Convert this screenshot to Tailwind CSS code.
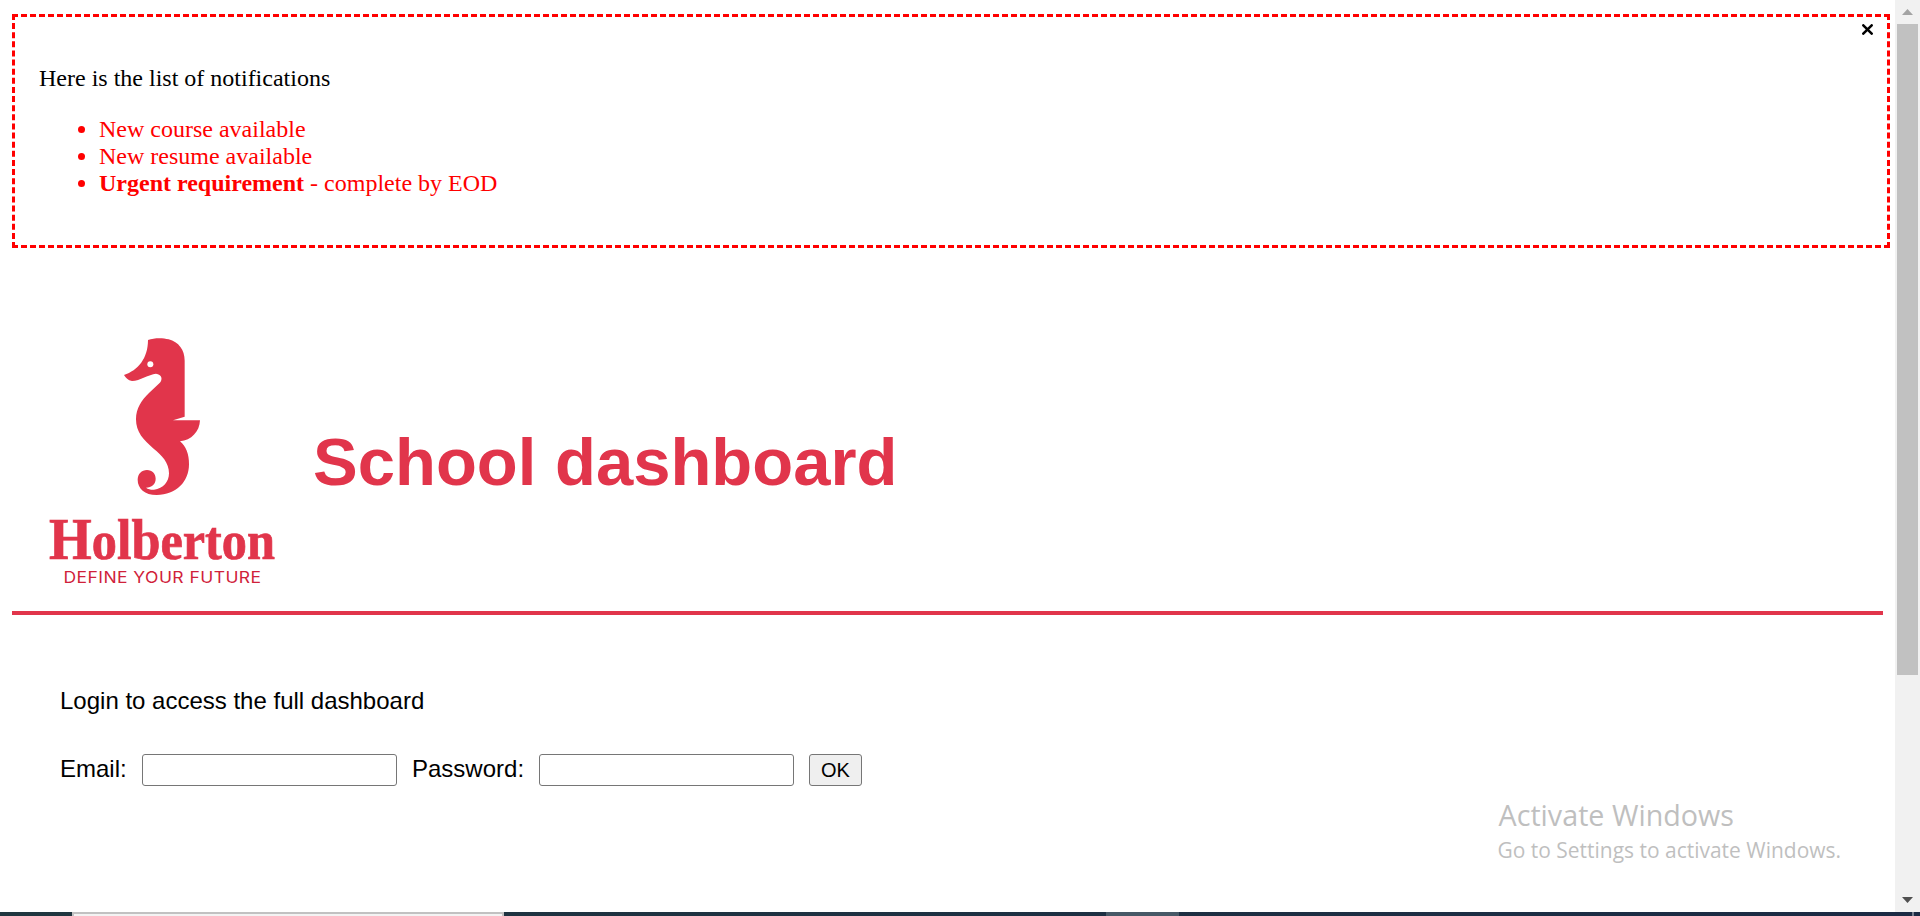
<!DOCTYPE html>
<html lang="en">
<head>
<meta charset="utf-8">
<title>School dashboard</title>
<script src="https://cdn.jsdelivr.net/npm/@tailwindcss/browser@4"></script>
</head>
<body class="flex h-[916px] w-[1920px] flex-col overflow-hidden bg-white text-black">
  <div class="relative flex h-[912px]">
    <main class="w-[1895px] pt-[14px] pl-3 font-['Liberation_Sans',Arial,sans-serif] text-[24px] leading-[27px]">
      <!-- Notifications -->
      <section class="relative h-[234px] w-[1878px] border-[3px] border-dashed border-[#ff0000] p-6 font-['Liberation_Serif','Times_New_Roman',serif]">
        <p class="my-6">Here is the list of notifications</p>
        <ul class="list-disc pl-[60px] text-[#ff0000]">
          <li>New course available</li>
          <li>New resume available</li>
          <li><strong class="font-bold">Urgent requirement</strong> - complete by EOD</li>
        </ul>
        <button class="absolute top-[7px] right-[14px]" aria-label="Close">
          <svg class="block" width="11" height="11" viewBox="0 0 11 11" fill="none" stroke="#000" stroke-width="2.5" stroke-linecap="round"><path d="M1.3 1.3L9.7 9.7M9.7 1.3L1.3 9.7"/></svg>
        </button>
      </section>

      <!-- Header -->
      <header class="flex h-[367px] w-[1871px] border-b-4 border-[#e1354b] pt-[72px]">
        <svg class="block shrink-0" width="301" height="280" viewBox="12 320 301 280" fill="#e1354b">
          <g transform="translate(100 320) scale(.33333)">
            <path d="M144 60C163 53 188 53 206 58C236 66 254 90 254 122V290L219 301H300C299 335 274 361 240 364C258 379 267 402 267 433C267 485 229 525 170 525C134 525 113 505 113 479C113 462 125 450 141 450C157 450 167 461 167 476C167 492 155 503 138 503C145 508 155 510 162 509C190 506 207 485 207 460C207 428 186 406 161 386C130 360 108 336 108 298C108 265 125 240 147 219L178 190C190 178 185 163 168 161C146 163 120 182 96 183C84 181 77 173 72 165C114 151 144 115 144 60Z"/>
            <circle cx="151" cy="133" r="9" fill="#fff"/>
          </g>
          <text x="49" y="558.700" textLength="226" lengthAdjust="spacingAndGlyphs" class="font-['Liberation_Serif',serif] text-[54px] font-bold" stroke="#e1354b" stroke-width=".7"><tspan class="text-[59px]">H</tspan>o<tspan class="text-[56px]">lb</tspan>erton</text>
          <text x="63.500" y="583" textLength="198" lengthAdjust="spacingAndGlyphs" fill="#d0213a" class="font-['Inter',sans-serif] text-[16px] tracking-[0.4px]">DEFINE YOUR FUTURE</text>
        </svg>
        <h1 class="pt-[103px] text-[67px] leading-[77px] font-bold text-[#e1354b]">School dashboard</h1>
      </header>

      <!-- Login -->
      <section class="pt-[72px] pl-12">
        <p>Login to access the full dashboard</p>
        <form class="mt-[40px] flex h-8 items-center">
          <label for="email" class="w-[82px] pb-[3px]">Email:</label>
          <input id="email" type="email" class="h-8 w-[255px] rounded-[3px] border border-[#767676] bg-white">
          <label for="password" class="ml-[15px] w-[127px] pb-[3px]">Password:</label>
          <input id="password" type="password" class="h-8 w-[255px] rounded-[3px] border border-[#767676] bg-white">
          <button type="button" class="ml-[15px] h-8 w-[53px] rounded-[3px] border border-[#767676] bg-[#efefef] text-[20px] leading-[30px]">OK</button>
        </form>
      </section>
    </main>

    <!-- Scrollbar -->
    <aside class="flex w-[25px] flex-col items-center bg-[#f1f1f1] pr-px">
      <svg class="block shrink-0" width="21" height="24" viewBox="0 0 21 24"><path d="M5 15L10.500 9L16 15Z" fill="#a3a3a3"/></svg>
      <div class="h-[651px] w-[21px] bg-[#c1c1c1]"></div>
      <svg class="mt-auto block shrink-0" width="21" height="24" viewBox="0 888 21 24"><path d="M5 897H16L10.500 903Z" fill="#505050"/></svg>
    </aside>

    <!-- Desktop watermark -->
    <svg class="absolute top-[790px] left-[1490px]" width="370" height="90" viewBox="1490 790 370 90" fill="#bfbfbf">
      <text x="1498.500" y="826" textLength="235.500" lengthAdjust="spacingAndGlyphs" class="font-['Open_Sans',sans-serif] text-[29px]">Activate Windows</text>
      <text x="1497.500" y="858" textLength="343.500" lengthAdjust="spacingAndGlyphs" class="font-['Open_Sans',sans-serif] text-[21.500px]">Go to Settings to activate Windows.</text>
    </svg>
  </div>

  <!-- Taskbar edge -->
  <footer class="flex h-1 bg-linear-to-r from-[#20363f] to-[#1b2a44]">
    <div class="ml-[72px] h-1 w-[432px] border-x-2 border-t-2 border-[#c1c1c1] bg-[#f3f3f3]"></div>
    <div class="ml-[602px] h-1 w-[73px] bg-[#475866]"></div>
    <div class="ml-auto mr-[6px] h-1 w-[2px] bg-[#77808f]"></div>
  </footer>
</body>
</html>
